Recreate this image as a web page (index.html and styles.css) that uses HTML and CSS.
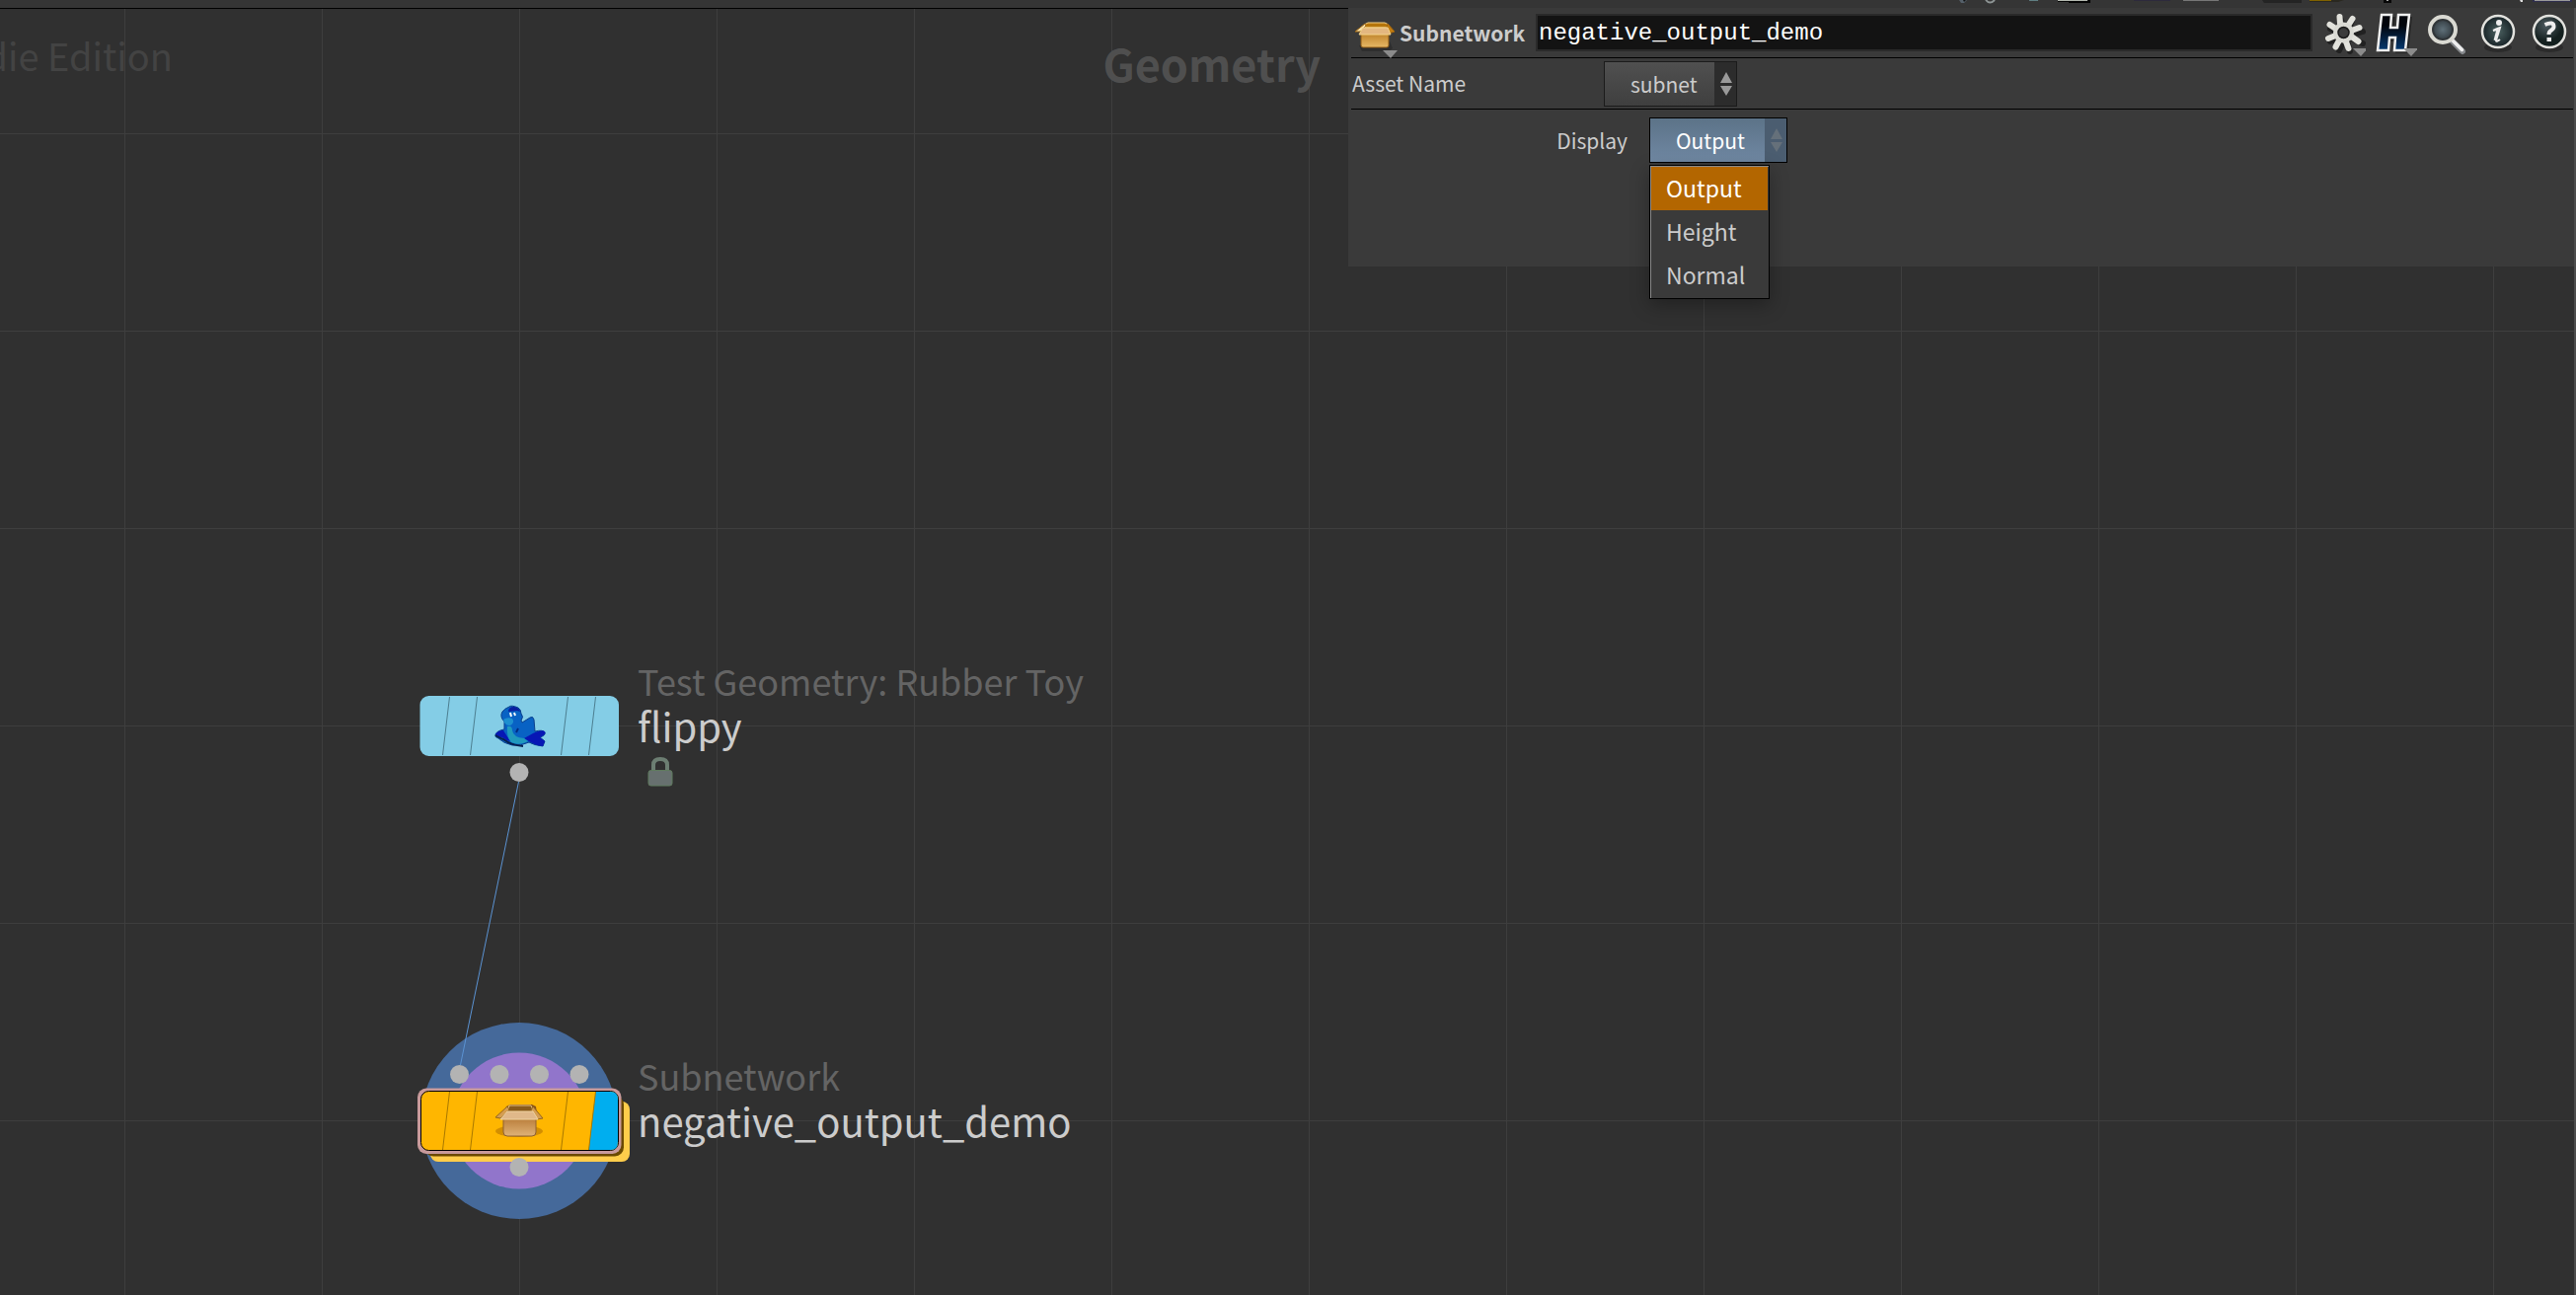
FILE: index.html
```html
<!DOCTYPE html>
<html lang="en">
<head>
<meta charset="utf-8">
<title>Geometry network</title>
<link rel="stylesheet" href="styles.css">
</head>
<body>
<div class="app">
  <div class="toolstrip" aria-hidden="true">
    <svg width="640" height="8" viewBox="0 0 640 8">
      <path d="M15 0h8l-3 3h-3z" fill="#55606a"/><path d="M19 0h3l-2 2z" fill="#111"/>
      <path d="M42 0q4 5 9 0" fill="none" stroke="#8d9494" stroke-width="2"/>
      <path d="M86 0h9v1h-9z" fill="#5f7f83"/>
      <path d="M115 0h33v3h-22v-1h-11z" fill="#050505"/><path d="M115 0h30v1h-30z" fill="#b4b9b0"/>
      <path d="M192 0h37v1h-37z" fill="#2d2a3c"/><path d="M242 0h36v1h-36z" fill="#777"/>
      <path d="M322 0h40v3h-38z" fill="#242424"/>
      <path d="M370 0h35l-6 2h-29z" fill="#2a2820"/><path d="M370 0h22v1h-22z" fill="#806200"/>
      <path d="M445 0h8v3h-8z" fill="#080808"/><path d="M448 0h2v1h-2z" fill="#aaa"/>
      <path d="M583 0h3v2h-2z" fill="#ddd"/>
      <path d="M596 0h40v2h-40z" fill="#2e2d4d"/><path d="M598 0h36v1h-36z" fill="#9a9a9a"/>
    </svg>
  </div>

  <main class="editor">
    <section class="watermarks">
      <p class="edition">die Edition</p>
      <h1 class="context">Geometry</h1>
    </section>

    <section class="params" aria-label="Parameters">
      <header class="params-head">
        <button class="icon-btn node-type" aria-label="Subnetwork menu">
          <svg width="48" height="44" viewBox="0 0 48 44">
            <defs>
              <linearGradient id="boxFront" x1="0" y1="0" x2="0" y2="1"><stop offset="0" stop-color="#bd8027"/><stop offset="1" stop-color="#e6b866"/></linearGradient>
            </defs>
            <path d="M8 29l3 6h27l4-3-3-7z" fill="#222" opacity=".5"/>
            <path d="M13 8l4-2h17l4 2 2 8H10z" fill="#8a560d"/>
            <path d="M13 8l4-2h17l4 2-1 3H14z" fill="#b5750b" stroke="#f2cf87" stroke-width="1"/>
            <path d="M14 7L4 15l5 0 6-6z" fill="#f5dfa9" stroke="#a26a16" stroke-width="1"/>
            <path d="M37 7l7 8-6 2-2-7z" fill="#c27d12" stroke="#a0640d" stroke-width="1"/>
            <path d="M10 16h28v13q0 2-2 2H12q-2 0-2-2z" fill="url(#boxFront)" stroke="#8e5a14" stroke-width="1"/>
            <path d="M12 11h25l3 7H8z" fill="#e3b780" stroke="#f4d58c" stroke-width="1"/>
            <path d="M32 34h15l-7 8z" fill="#8b8b8b"/>
          </svg>
        </button>
        <label class="type-name" for="node-name">Subnetwork</label>
        <input class="node-name" id="node-name" type="text" value="negative_output_demo" spellcheck="false">
        <div class="head-actions">
          <button class="icon-btn" aria-label="Settings">
            <svg width="42" height="44" viewBox="0 0 42 44">
              <g transform="translate(21 22)" stroke="#111" stroke-width="6" stroke-linecap="round"><path d="M-4-15L5 17M7-14L-6 16M-15-6L18 9M-15 7L18-3" opacity=".6"/></g>
              <g transform="translate(19.500 20)" stroke="#e2e2dc" stroke-width="6" stroke-linecap="round">
                <path d="M-3.300-7L-4-16M4.500-7L9-14M8-2L16-5M8 4L15 9M2 8L5 16M-4 7L-8 14.500M-8 3L-15.500 6M-8-4L-14-8"/>
              </g>
              <circle cx="19.500" cy="20" r="8" fill="#3b3b3b" stroke="#dadad4" stroke-width="5"/>
              <circle cx="19.500" cy="20" r="5.500" fill="#3b3b3b" stroke="#1a1a1a" stroke-width="1.500"/>
              <path d="M29 36h15l-7 8z" fill="#8b8b8b"/>
            </svg>
          </button>
          <button class="icon-btn" aria-label="Houdini Engine">
            <svg width="42" height="44" viewBox="0 0 42 44">
              <defs><linearGradient id="hFill" x1="0" y1="0" x2="0" y2="1"><stop offset=".3" stop-color="#02050c"/><stop offset="1" stop-color="#053a72"/></linearGradient></defs>
              <path d="M8 4h12l-1 12h5l1-12h12l-4 37H20l1-12h-6l-1 12H4z" fill="#1b1b1b" opacity=".6"/>
              <path d="M6 2h10l-1 13h7l1-13h11l-4 36H19l1-13h-6l-1 13H2z" fill="url(#hFill)" stroke="#f0f0f0" stroke-width="2.500"/>
              <path d="M28 36h15l-7 8z" fill="#8b8b8b"/>
            </svg>
          </button>
          <button class="icon-btn" aria-label="Search">
            <svg width="42" height="44" viewBox="0 0 42 44">
              <defs><radialGradient id="lens"><stop offset="0" stop-color="#5f7079"/><stop offset="1" stop-color="#3a444a"/></radialGradient></defs>
              <path d="M25 28L36 39" stroke="#85888c" stroke-width="6" stroke-linecap="round"/>
              <path d="M25 27L35.500 37.500" stroke="#eee" stroke-width="3.500" stroke-linecap="round"/>
              <circle cx="16" cy="17" r="13" fill="#303538" stroke="#d9d9d2" stroke-width="4"/>
              <circle cx="16" cy="17" r="9" fill="url(#lens)"/>
            </svg>
          </button>
          <button class="icon-btn" aria-label="Info">
            <svg width="42" height="44" viewBox="0 0 42 44">
              <defs><radialGradient id="disc"><stop offset="0" stop-color="#4b6060"/><stop offset="1" stop-color="#182327"/></radialGradient></defs>
              <ellipse cx="20" cy="35" rx="14" ry="5" fill="#222" opacity=".6"/>
              <circle cx="20" cy="19" r="16" fill="url(#disc)" stroke="#e2e2de" stroke-width="2.500"/>
              <circle cx="21" cy="10" r="3" fill="#eee"/>
              <path d="M15 18q4-2 7-3l-4 13q0 2 4-1M15 18l4-1" fill="none" stroke="#eee" stroke-width="2"/><path d="M20 17l-3 11" stroke="#eee" stroke-width="3"/>
            </svg>
          </button>
          <button class="icon-btn" aria-label="Help">
            <svg width="42" height="44" viewBox="0 0 42 44">
              <defs><radialGradient id="disc2" cx=".4" cy=".3"><stop offset="0" stop-color="#4d5a60"/><stop offset="1" stop-color="#14201f"/></radialGradient></defs>
              <ellipse cx="20" cy="35" rx="14" ry="5" fill="#222" opacity=".6"/>
              <circle cx="20" cy="19" r="16" fill="url(#disc2)" stroke="#e2e2de" stroke-width="2.500"/>
              <path d="M15.500 12q9-4 9 2 0 2-3 4-2 1-2 4" fill="none" stroke="#eee" stroke-width="4"/><path d="M17.500 25h4.500v4h-4.500z" fill="#eee"/>
            </svg>
          </button>
        </div>
      </header>

      <div class="asset-row">
        <label class="asset-label" for="asset">Asset Name</label>
        <div class="picker">
          <select id="asset" class="picker-select"><option>subnet</option></select>
          <svg class="picker-arrows" width="22" height="44" viewBox="0 0 22 44"><path d="M6 21l6-11 6 11zM6 24h12l-6 10z"/></svg>
        </div>
      </div>

      <div class="param-row">
        <label class="param-label" for="display">Display</label>
        <div class="picker picker-open">
          <select id="display" class="picker-select"><option>Output</option><option>Height</option><option>Normal</option></select>
          <svg class="picker-arrows" width="22" height="44" viewBox="0 0 22 44"><path d="M6 21l6-11 6 11zM6 24h12l-6 10z"/></svg>
          <ul class="menu" role="listbox" aria-label="Display">
            <li class="menu-item selected" role="option" aria-selected="true">Output</li>
            <li class="menu-item" role="option" aria-selected="false">Height</li>
            <li class="menu-item" role="option" aria-selected="false">Normal</li>
          </ul>
        </div>
      </div>
    </section>

    <article class="node node-flippy">
      <svg width="220" height="100" viewBox="0 0 220 100">
        <rect x="5.500" y="5" width="201.500" height="61" rx="9" fill="#84cde6"/>
        <path d="M35.500 6L28.500 65M63.500 6L56.500 65M155.500 6L148.500 65M183.500 6L176.500 65" stroke="#4c7e90" stroke-width="1"/>
        <path d="M82 44q2-4 9-5v-8q-5-5-2-10 2-3 7-5 2-2 9 1 3 2 3 6 3 3 0 7l1 2 8-5q3-2 4 2l1 12q8-2 10 1 1 3-5 5l5 4-2 5q-9-1-14-4-8 4-17 3-9-2-14-7-4-1-3-4z" fill="#0862c4" stroke="#0a3f8c"/>
        <path d="M82 44q2-4 8-4l7 11q-5-1-8-4-6 0-7-3zM111 48l9-5q9-4 12-2 2 3-5 6l5 4-2 5q-9-1-19-8z" fill="#0717b5"/>
        <path d="M82 45q5 3 8 4 8 6 20 7" fill="none" stroke="#06204f" stroke-width="2"/>
        <path d="M95 21q0-5 6-5 5 1 6 5l-3-1z" fill="#0b1fa0"/>
        <path d="M90 29q4-3 9-1 3 4-2 7-6 0-7-6z" fill="#1d8fcf"/>
        <path d="M94 36q5-1 5 4 1 7 12 8l4 3q-9 5-17 1-5-5-4-16z" fill="#2099bd"/>
        <path d="M97 22l1 4M101 22l1 3" stroke="#fff" stroke-width="2"/><path d="M105 38l-2 4" stroke="#022c80" stroke-width="2"/>
        <circle cx="106" cy="82.500" r="9.500" fill="#b3b3b3"/>
      </svg>
      <div class="node-text">
        <p class="node-type-label">Test Geometry: Rubber Toy</p>
        <p class="node-label">flippy</p>
        <svg class="lock" width="26" height="30" viewBox="0 0 26 30"><path d="M6 14V8q0-6 7-6t7 6v6" fill="none" stroke="#6c7e72" stroke-width="4"/><rect x="1" y="13.500" width="24" height="15.500" rx="2.500" fill="#67706f" stroke="#5f7b5e"/></svg>
      </div>
    </article>

    <article class="node node-subnet">
      <svg width="220" height="210" viewBox="0 0 220 210">
        <defs><linearGradient id="boxFront2" x1="0" y1="0" x2="0" y2="1"><stop offset="0" stop-color="#b87b38"/><stop offset="1" stop-color="#dfb277"/></linearGradient></defs>
        <circle cx="106" cy="105.500" r="99.500" fill="#45699a"/>
        <circle cx="106" cy="105.500" r="69" fill="#9175cb"/>
        <g fill="#b3b3b3"><circle cx="45.500" cy="58.500" r="9.500"/><circle cx="86" cy="58.500" r="9.500"/><circle cx="126.500" cy="58.500" r="9.500"/><circle cx="167" cy="58.500" r="9.500"/></g>
        <rect x="16" y="86" width="202" height="61" rx="8" fill="#ffcd4b"/>
        <rect x="10" y="80" width="202" height="61.500" rx="9" fill="#6b4900"/>
        <rect x="3" y="72.500" width="206.500" height="66.500" rx="9" fill="#c89a9b"/>
        <rect x="6.500" y="75.500" width="200" height="60" rx="8" fill="#ffb600" stroke="#000"/>
        <path d="M183.500 76H199q7 0 7 8v43q0 8-7 8h-22.500z" fill="#00aeef"/>
        <path d="M35.500 76L28.500 135M63.500 76L56.500 135M155.500 76L148.500 135M183.500 76L176.500 135" stroke="#a87800"/>
        <ellipse cx="106" cy="116" rx="24" ry="6" fill="#c88500" opacity=".8"/>
        <path d="M93 91l4-2h22l4 2 1 7H90z" fill="#875318"/><path d="M96 90h22l3 7H94z" fill="#8a5a1b" stroke="#e8c480"/>
        <path d="M94 91L82 102l5 1 9-9zM120 91l10 12-6 1-6-9z" fill="#d49d51" stroke="#94651d"/>
        <path d="M90 102h33v15q0 4-4 4H94q-4 0-4-4z" fill="url(#boxFront2)" stroke="#8e6030"/>
        <path d="M94 96h26l5 8H87z" fill="#e0b88a" stroke="#efd3a1"/>
        <circle cx="106" cy="152.500" r="9.500" fill="#b3b3b3"/>
      </svg>
      <div class="node-text">
        <p class="node-type-label">Subnetwork</p>
        <p class="node-label">negative_output_demo</p>
      </div>
    </article>

    <svg class="wire" width="80" height="300" viewBox="0 0 80 300"><path d="M65.500 9L6.500 296" stroke="#5b93d3" stroke-width="1"/></svg>
  </main>
</div>
</body>
</html>
```
FILE: styles.css
```css
* { box-sizing: border-box; margin: 0; padding: 0; }

body {
  background: #303030;
  color: #cccccc;
  font-family: "Noto Sans CJK SC", "Open Sans", sans-serif;
  font-size: 21px;
}

svg { display: block; }

.app {
  display: flex;
  flex-direction: column;
  min-height: 100vh;
  overflow: hidden;
}

.toolstrip {
  display: flex;
  justify-content: flex-end;
  height: 8px;
  background: #353535;
}

.editor {
  position: relative;
  flex: 1;
  display: grid;
  grid-template-columns: 1366fr 1242fr;
  align-items: start;
  border-right: 2px solid #4c4c4c;
  background-color: #303030;
  background-image:
    linear-gradient(#3e3e3e 1px, transparent 1px),
    linear-gradient(90deg, #3e3e3e 1px, transparent 1px);
  background-size: 200px 200px;
  background-position: 126px 127px;
}

/* Canvas watermarks */
.watermarks {
  display: flex;
  justify-content: space-between;
  padding-right: 28px;
  border-top: 1px solid #000;
}

.edition {
  display: flex;
  justify-content: flex-end;
  width: 175px;
  padding-top: 19px;
  overflow: hidden;
  white-space: nowrap;
  font-size: 38px;
  line-height: 56px;
  color: #434343;
}

.context {
  padding-top: 27px;
  font-size: 45px;
  line-height: 56px;
  font-weight: 700;
  color: #4f4f4f;
}

/* Parameter pane */
.params {
  display: flex;
  flex-direction: column;
  min-height: 262px;
  padding: 0 1px 0 3px;
  background: #3a3a3a;
}

.params-head {
  display: flex;
  align-items: center;
  height: 51px;
  padding-right: 2px;
  border-bottom: 1px solid #000;
}

.icon-btn {
  border: 0;
  background: none;
  flex: none;
}

.node-type { width: 49px; }
.node-type svg { margin-top: 12px; }

.type-name {
  width: 138px;
  font-weight: 700;
  line-height: 32px;
}

.node-name {
  flex: 1;
  min-width: 0;
  height: 38px;
  padding: 0 1px;
  border: 2px solid #2a2a2a;
  background: #131313;
  color: #ffffff;
  font-family: "Liberation Mono", "DejaVu Sans Mono", monospace;
  font-size: 24px;
  line-height: 34px;
  outline: 0;
}

.head-actions {
  display: flex;
  gap: 10px;
  padding: 4px 0 0 12px;
}

.asset-row {
  display: flex;
  align-items: center;
  height: 52px;
  border-bottom: 1px solid #000;
}

.asset-label {
  width: 256px;
  padding: 0 0 2px 1px;
}

.picker {
  position: relative;
  width: 135px;
  height: 46px;
  border: 1px solid #1b1b1b;
  background: linear-gradient(#505050, #3f3f3f);
}

.picker-select {
  appearance: none;
  width: 100%;
  height: 100%;
  padding: 0 22px 0 26px;
  border: 0;
  background: linear-gradient(90deg, transparent calc(100% - 22px), #2c2c2c 0);
  color: #cccccc;
  font: inherit;
  outline: 0;
}

.picker-arrows {
  position: absolute;
  top: 0;
  right: 0;
  fill: #9a9a9a;
  pointer-events: none;
}

.param-row {
  display: flex;
  align-items: center;
  gap: 22px;
  padding-top: 8px;
}

.param-label {
  width: 280px;
  text-align: right;
}

.picker-open {
  width: 140px;
  border-color: #000;
  background: linear-gradient(#5c7388, #7088a3);
}

.picker-open .picker-select {
  background: linear-gradient(90deg, transparent calc(100% - 22px), #4b5d70 0);
  color: #ffffff;
}

.picker-open .picker-arrows { fill: #65707a; }

.menu {
  position: absolute;
  top: 47px;
  left: -1px;
  z-index: 2;
  width: 122px;
  border: 1px solid #000;
  background: #3a3a3a;
  box-shadow: inset 1px 1px #8a8a8a, 0 6px 18px rgba(0, 0, 0, 0.3);
  list-style: none;
  padding: 1px;
}

.menu-item {
  height: 44px;
  padding-left: 15px;
  font-size: 23px;
  line-height: 42px;
}

.menu-item.selected { background: #b36600; color: #ffffff; }

/* Nodes on the free canvas */
.wire {
  position: absolute;
  left: 460px;
  top: 775px;
  pointer-events: none;
}

.node {
  position: absolute;
  display: flex;
  gap: 6px;
  white-space: nowrap;
}

.node-flippy { left: 420px; top: 692px; }
.node-subnet { left: 420px; top: 1022px; }

.node-type-label {
  font-size: 36px;
  line-height: 44px;
  color: #646464;
}

.node-label {
  font-size: 40px;
  line-height: 48px;
}

.node-flippy .node-text { margin-top: -33px; }
.node-subnet .node-text { margin-top: 37px; }

.lock { margin: 8px 0 0 10px; }
```
